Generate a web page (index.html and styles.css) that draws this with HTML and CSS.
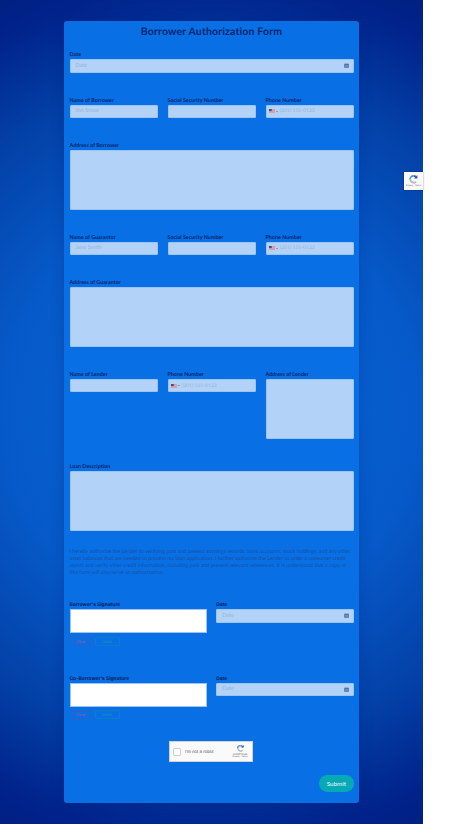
FILE: index.html
```html
<!DOCTYPE html>
<html lang="en">
<head>
<meta charset="utf-8">
<title>Borrower Authorization Form</title>
<link rel="stylesheet" href="styles.css">
</head>
<body>
<svg width="0" height="0" class="defs">
  <symbol id="cal" viewBox="0 0 10 10"><path d="M1 2h8v7H1z M2.500 1v1.500M7.500 1v1.500" fill="#4a6a9c" stroke="#4a6a9c"/><path d="M2 4.500h6M2 6.500h6" stroke="#b5d2f5" stroke-width=".8"/></symbol>
  <symbol id="flag" viewBox="0 0 12 8"><rect width="12" height="8" fill="#e8e8f0"/><path d="M0 1h12M0 3h12M0 5h12M0 7h12" stroke="#d0525f"/><rect width="5.500" height="4.200" fill="#3a4f8f"/></symbol>
  <symbol id="rc" viewBox="0 0 20 20"><path d="M10 2a8 8 0 0 1 7 4l-2.500 2A5 5 0 0 0 10 5z" fill="#2f5fb5"/><path d="M2 10a8 8 0 0 1 8-8v3a5 5 0 0 0-5 5z" fill="#4d90ef"/><path d="M3 10a7.500 7.500 0 0 0 13 5l-2.500-2A4.500 4.500 0 0 1 6 10z" fill="#b4b7bd"/><path d="M17 2v6h-6z" fill="#2f5fb5"/></symbol>
</svg>
<main class="page">
  <form class="card">
    <h1 class="title">Borrower Authorization Form</h1>

    <div class="field">
      <label class="label">Date</label>
      <div class="input between"><span class="ph">Date</span><svg class="cal"><use href="#cal"/></svg></div>
    </div>

    <div class="row three">
      <div class="field"><label class="label">Name of Borrower</label><div class="input"><span class="ph">Jon Snow</span></div></div>
      <div class="field"><label class="label">Social Security Number</label><div class="input"></div></div>
      <div class="field"><label class="label">Phone Number</label><div class="input phone"><svg class="flag"><use href="#flag"/></svg><i class="caret"></i><span class="ph tel">(201) 555-0123</span></div></div>
    </div>

    <div class="field"><label class="label">Address of Borrower</label><div class="area"></div></div>

    <div class="row three">
      <div class="field"><label class="label">Name of Guarantor</label><div class="input"><span class="ph">Jane Smith</span></div></div>
      <div class="field"><label class="label">Social Security Number</label><div class="input"></div></div>
      <div class="field"><label class="label">Phone Number</label><div class="input phone"><svg class="flag"><use href="#flag"/></svg><i class="caret"></i><span class="ph tel">(201) 555-0123</span></div></div>
    </div>

    <div class="field"><label class="label">Address of Guarantor</label><div class="area"></div></div>

    <div class="row three">
      <div class="field"><label class="label">Name of Lender</label><div class="input"></div></div>
      <div class="field"><label class="label">Phone Number</label><div class="input phone"><svg class="flag"><use href="#flag"/></svg><i class="caret"></i><span class="ph tel">(201) 555-0123</span></div></div>
      <div class="field"><label class="label">Address of Lender</label><div class="area"></div></div>
    </div>

    <div class="field"><label class="label">Loan Description</label><div class="area"></div></div>

    <p class="terms">I hereby authorize the Lender to verifying past and present earnings records, bank accounts, stock holdings, and any other<br>asset balances that are needed to process my loan application. I further authorize the Lender to order a consumer credit<br>report and verify other credit information, including past and present relevant references. It is understood that a copy of<br>this form will also serve as authorization.</p>

    <div class="row two">
      <div class="field">
        <label class="label strong">Borrower's Signature</label>
        <div class="sig"></div>
        <div class="sig-actions"><span class="btn clear">Clear</span><span class="btn undo">Undo</span></div>
      </div>
      <div class="field">
        <label class="label strong">Date</label>
        <div class="input between"><span class="ph">Date</span><svg class="cal"><use href="#cal"/></svg></div>
      </div>
    </div>

    <div class="row two next-sig">
      <div class="field">
        <label class="label strong">Co-Borrower's Signature</label>
        <div class="sig"></div>
        <div class="sig-actions"><span class="btn clear">Clear</span><span class="btn undo">Undo</span></div>
      </div>
      <div class="field">
        <label class="label strong">Date</label>
        <div class="input between"><span class="ph">Date</span><svg class="cal"><use href="#cal"/></svg></div>
      </div>
    </div>

    <div class="captcha">
      <span class="box"></span>
      <span class="robot">I'm not a robot</span>
      <span class="brand"><svg class="rc"><use href="#rc"/></svg><span class="rc-name">reCAPTCHA</span><span class="rc-links">Privacy - Terms</span></span>
    </div>

    <div class="actions"><button type="button" class="submit">Submit</button></div>
  </form>
  <div class="badge"><svg class="badge-icon"><use href="#rc"/></svg><span class="badge-text">Privacy - Terms</span></div>
</main>
</body>
</html>
```

FILE: styles.css
```css
* { box-sizing: border-box; }
html, body { margin: 0; padding: 0; background: #fff; }
body { width: 474px; height: 824px; overflow: hidden; font-family: "Lato", "Liberation Sans", sans-serif; text-rendering: geometricPrecision; }
.defs { position: absolute; }
.page {
  position: relative;
  width: 423px;
  height: 824px;
  padding: 21px 64px;
  background: radial-gradient(circle 470px at 50% 50%, #0a68da 0%, #0659c8 45%, #0340a6 72%, #00228a 92%, #001f80 100%);
}
.card {
  width: 295px;
  height: 782.300px;
  padding: 0 5.500px;
  display: flex;
  flex-direction: column;
  border-radius: 3px;
  background: #0870e4;
  box-shadow: 0 0 14px rgba(0,20,90,.22);
  color: #04206b;
}
.title { margin: 0 0 7.200px; height: 22px; line-height: 22px; text-align: center; font-size: 10.500px; font-weight: 700; color: #032470; letter-spacing: .15px; }
.field { display: flex; flex-direction: column; min-width: 0; }
.card > .field + .row, .card > .row + .field, .card > .row + .row { margin-top: 22.850px; }
.label { height: 9px; line-height: 10px; font-size: 5.400px; font-weight: 700; color: #06266f; white-space: nowrap; }
.label.strong { font-family: "Inter", "Liberation Sans", sans-serif; font-size: 4.900px; color: #052060; }
.input {
  height: 13.500px;
  display: flex;
  align-items: center;
  padding: 0 5px;
  background: #b3d2f7;
  border: .5px solid #9cc3f2;
  border-radius: 1px;
}
.between { justify-content: space-between; }
.ph { font-size: 5.500px; color: #97b4d8; white-space: nowrap; }
.ph.tel { font-size: 5px; }
.cal { width: 5px; height: 5px; margin-right: -1px; }
.phone { padding: 0 2px; gap: 1.200px; }
.flag { width: 6px; height: 4px; }
.caret { width: 0; height: 0; border: 1.200px solid transparent; border-top: 1.600px solid #4a6a9c; border-bottom: 0; margin-right: 1px; }
.area { height: 60px; background: #b3d2f7; border: .5px solid #9cc3f2; border-radius: 1px; }
.row { display: grid; }
.three { grid-template-columns: 88px 88px 88px; column-gap: 10px; }
.two { grid-template-columns: 137.250px 137.250px; column-gap: 9.500px; }
.terms { margin: 18px 0 23px; font-size: 5.300px; line-height: 7.100px; color: #1a4fa5; white-space: nowrap; }
.card > .row.two { margin-top: 0; }
.card > .row.next-sig { margin-top: 27.500px; }
.sig { height: 24px; background: #fff; border: .5px solid #9cc3f2; }
.sig-actions { display: flex; gap: 3px; margin-top: 3.400px; }
.btn { height: 9.500px; display: flex; align-items: center; justify-content: center; font-size: 4px; border: .5px solid; border-radius: 1px; }
.clear { width: 22px; color: #a9538f; border-color: #2a62c8; }
.undo { width: 25px; color: #1f9a9a; border-color: #0a7fc6; }
.captcha {
  align-self: center;
  width: 84px;
  height: 21.700px;
  margin: 21.400px 0 0 -1px;
  display: flex;
  align-items: center;
  background: #fafafa;
  border: .5px solid #d3d3d3;
  padding: 0 3px;
}
.box { width: 8px; height: 8px; background: #fff; border: .5px solid #d0d0d0; border-radius: 1px; flex: none; }
.robot { margin-left: 4px; font-size: 4.500px; color: #555; white-space: nowrap; font-family: "Liberation Sans", sans-serif; }
.brand { margin-left: auto; display: flex; flex-direction: column; align-items: center; width: 18px; }
.rc { width: 9px; height: 9px; }
.rc-name { font-size: 2.600px; color: #555; line-height: 3.500px; font-family: "Liberation Sans", sans-serif; }
.rc-links { font-size: 2.200px; color: #555; line-height: 3px; white-space: nowrap; font-family: "Liberation Sans", sans-serif; }
.actions { display: flex; justify-content: flex-end; margin-top: 13px; }
.submit {
  width: 34.300px;
  height: 16.300px;
  padding: 0;
  border: 0;
  border-radius: 8.200px;
  background: #07a9b5;
  color: #f0fbff;
  font-family: "Lato", sans-serif;
  font-size: 6.300px;
  font-weight: 400;
}
.badge {
  position: absolute;
  left: 404px;
  top: 172px;
  width: 19px;
  height: 18px;
  padding-top: 2px;
  display: flex;
  flex-direction: column;
  align-items: center;
  background: #f9f9f9;
  box-shadow: 0 0 2px rgba(0,0,0,.4);
}
.badge-icon { width: 11px; height: 11px; }
.badge-text { font-size: 2.200px; line-height: 3px; color: #555; white-space: nowrap; font-family: "Liberation Sans", sans-serif; }
```
